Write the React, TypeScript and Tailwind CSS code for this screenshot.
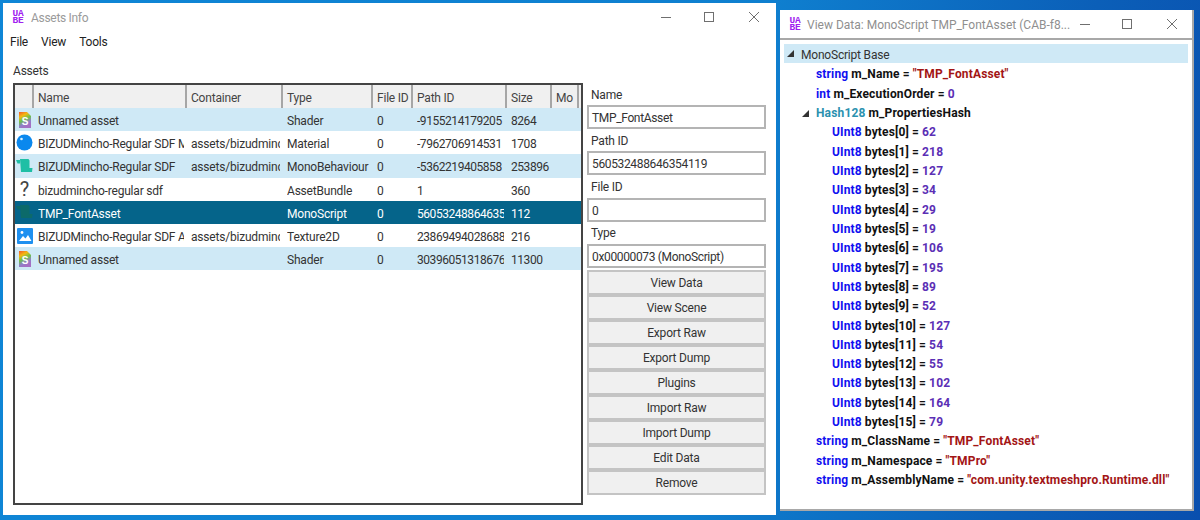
import React from 'react';

const columns = [
  { label: '', width: 'w-[19px]' },
  { label: 'Name', width: 'w-[153px]' },
  { label: 'Container', width: 'w-[96px]' },
  { label: 'Type', width: 'w-[90px]' },
  { label: 'File ID', width: 'w-[40px]' },
  { label: 'Path ID', width: 'w-[94px]' },
  { label: 'Size', width: 'w-[45px]' },
  { label: 'Mo', width: 'w-[27px]' },
];

const rows = [
  { icon: 'shader', name: 'Unnamed asset', container: '', type: 'Shader', fileId: '0', pathId: '-9155214179205', size: '8264' },
  { icon: 'material', name: 'BIZUDMincho-Regular SDF M', container: 'assets/bizudminc', type: 'Material', fileId: '0', pathId: '-7962706914531', size: '1708' },
  { icon: 'mono', name: 'BIZUDMincho-Regular SDF', container: 'assets/bizudminc', type: 'MonoBehaviour', fileId: '0', pathId: '-5362219405858', size: '253896' },
  { icon: 'unknown', name: 'bizudmincho-regular sdf', container: '', type: 'AssetBundle', fileId: '0', pathId: '1', size: '360' },
  { icon: 'script', name: 'TMP_FontAsset', container: '', type: 'MonoScript', fileId: '0', pathId: '56053248864635', size: '112', selected: true },
  { icon: 'texture', name: 'BIZUDMincho-Regular SDF A', container: 'assets/bizudminc', type: 'Texture2D', fileId: '0', pathId: '23869494028688', size: '216' },
  { icon: 'shader', name: 'Unnamed asset', container: '', type: 'Shader', fileId: '0', pathId: '30396051318676', size: '11300' },
];

const fields = [
  { label: 'Name', value: 'TMP_FontAsset' },
  { label: 'Path ID', value: '560532488646354119' },
  { label: 'File ID', value: '0' },
  { label: 'Type', value: '0x00000073 (MonoScript)' },
];

const buttons = ['View Data', 'View Scene', 'Export Raw', 'Export Dump', 'Plugins', 'Import Raw', 'Import Dump', 'Edit Data', 'Remove'];

const bytes = [62, 218, 127, 34, 29, 19, 106, 195, 89, 52, 127, 54, 55, 102, 164, 79];

const Logo = () => (
  <div className="w-[12px] flex flex-col items-center font-['Liberation_Mono',monospace] font-bold text-[9.500px] leading-[7px] text-[#a020f0]">
    <span>UA</span>
    <span>BE</span>
  </div>
);

const WindowButtons = ({ gaps }: { gaps: [string, string] }) => (
  <div className="flex items-center text-[#6f6f6f]">
    <svg width="12" height="12" viewBox="0 0 12 12" className={gaps[0]}>
      <path d="M1 6.500h10" stroke="currentColor" fill="none" />
    </svg>
    <svg width="12" height="12" viewBox="0 0 12 12" className={gaps[1]}>
      <rect x="1.500" y="1.500" width="9" height="9" stroke="currentColor" fill="none" />
    </svg>
    <svg width="12" height="12" viewBox="0 0 12 12">
      <path d="M1 1l10 10M11 1L1 11" stroke="currentColor" fill="none" />
    </svg>
  </div>
);

const AssetIcon = ({ kind, id }: { kind: string; id: number }) => {
  if (kind === 'shader') {
    return (
      <svg width="14" height="18" viewBox="0 0 14 18">
        <defs>
          <linearGradient id={`rainbow${id}`} x1="0" y1="0" x2="0.4" y2="1">
            <stop offset="0" stopColor="#f0562a" />
            <stop offset="0.3" stopColor="#f5b811" />
            <stop offset="0.55" stopColor="#6cc24a" />
            <stop offset="0.8" stopColor="#8f7fc8" />
            <stop offset="1" stopColor="#a56fc4" />
          </linearGradient>
        </defs>
        <path d="M1 1h8l4 4v12H1z" fill={`url(#rainbow${id})`} />
        <text x="7" y="14" textAnchor="middle" fontSize="10" fontWeight="700" fill="#fff" fontFamily="Liberation Sans, sans-serif">S</text>
      </svg>
    );
  }
  if (kind === 'material') {
    return (
      <svg width="17" height="17" viewBox="0 0 17 17">
        <circle cx="8.500" cy="8.500" r="8" fill="#0a88ee" />
        <circle cx="5.500" cy="5" r="1.300" fill="#d6f0ff" />
      </svg>
    );
  }
  if (kind === 'mono' || kind === 'script') {
    const fill = kind === 'mono' ? '#1fbfa5' : '#0c6a6a';
    return (
      <svg width="17" height="14" viewBox="0 0 17 14">
        <path d="M0 1h4v3.500H1.500z" fill={fill} />
        <path d="M4 0h8.500l1 1.500V9h3l-.5 4H5z" fill={fill} />
      </svg>
    );
  }
  if (kind === 'texture') {
    return (
      <svg width="16" height="16" viewBox="0 0 16 16">
        <rect width="16" height="16" rx="1" fill="#1e90f0" />
        <path d="M2 13l4-5 2.500 2.500L11 7l3.500 6z" fill="#fff" />
        <circle cx="5" cy="4.500" r="1.400" fill="#fff" />
      </svg>
    );
  }
  return <span className="text-[20px] leading-none text-[#444]">?</span>;
};

const TreeLine = ({ indent, type, name, value, kind }: { indent: string; type: string; name: string; value?: string; kind?: 'text' | 'num' }) => (
  <div className={`h-[19.32px] pt-[3px] flex items-center whitespace-nowrap font-bold tracking-[0.15px] ${indent}`}>
    <span className="text-[#1010f0]">{type}</span>
    <span className="text-[#111] ml-[3px]">{name}</span>
    {value && (
      <>
        <span className="text-[#111] ml-[3px]">=</span>
        <span className={`ml-[3px] ${kind === 'text' ? 'text-[#a31515]' : 'text-[#5b2fb5]'}`}>{value}</span>
      </>
    )}
  </div>
);

const Caret = () => <span className="w-0 h-0 border-l-[7px] border-l-transparent border-b-[7px] border-b-[#333]" />;

const App: React.FC = () => {
  return (
    <div className="w-[1200px] h-[520px] overflow-hidden flex items-start pl-[3px] pt-[3px] bg-[linear-gradient(100deg,#0f86d6_0%,#0f7fcf_60%,#0b5fb8_85%,#0a4fae_100%)] font-['Roboto',sans-serif] text-[12px] tracking-[-0.2px] text-[#333]">
      {/* Assets Info window */}
      <div className="w-[773px] h-[512px] bg-white flex flex-col shrink-0">
        <div className="h-[28px] flex items-center justify-between pl-[9px] pr-[16px] shrink-0">
          <div className="flex items-center gap-[7px]">
            <Logo />
            <span className="text-[#9a9a9a] pt-[2px] tracking-[-0.3px]">Assets Info</span>
          </div>
          <WindowButtons gaps={['mr-[31px]', 'mr-[33px]']} />
        </div>
        <div className="h-[21px] flex items-center gap-[13px] pl-[7px] text-[#222]">
          <span>File</span>
          <span>View</span>
          <span>Tools</span>
        </div>
        <div className="h-[31px] flex items-end pl-[10px] pb-[3px]">Assets</div>
        <div className="flex pl-[10px] gap-[4px]">
          <div className="w-[570px] h-[422px] border-2 border-[#444] flex flex-col">
            <div className="h-[23px] flex bg-[#f0f0f0] text-[#444]">
              {columns.map((col, i) => (
                <div key={i} className={`${col.width} h-full pl-[4px] pt-[2px] flex items-center border-r-2 border-[#a6a6a6] overflow-hidden whitespace-nowrap`}>
                  {col.label}
                </div>
              ))}
            </div>
            {rows.map((row, i) => {
              const bg = row.selected ? 'bg-[#05648a] text-white' : i % 2 === 0 ? 'bg-[#cfe9f6]' : 'bg-white';
              return (
                <div key={i} className={`h-[23.2px] flex items-center whitespace-nowrap ${bg}`}>
                  <div className="w-[19px] flex justify-center items-center overflow-hidden"><AssetIcon kind={row.icon} id={i} /></div>
                  <div className="w-[153px] pl-[4px] pr-[3px] pt-[3px]"><div className="overflow-hidden">{row.name}</div></div>
                  <div className="w-[96px] pl-[4px] pr-[3px] pt-[3px]"><div className="overflow-hidden">{row.container}</div></div>
                  <div className="w-[90px] pl-[4px] pr-[3px] pt-[3px]"><div className="overflow-hidden">{row.type}</div></div>
                  <div className="w-[40px] pl-[4px] pt-[3px]">{row.fileId}</div>
                  <div className="w-[94px] pl-[4px] pr-[3px] pt-[3px] tracking-[-0.45px]"><div className="overflow-hidden">{row.pathId}</div></div>
                  <div className="w-[45px] pl-[4px] pt-[3px] tracking-[-0.45px]">{row.size}</div>
                </div>
              );
            })}
          </div>
          <div className="w-[179px] flex flex-col">
            {fields.map((f) => (
              <div key={f.label} className="h-[46.300px] flex flex-col">
                <div className="h-[22px] pl-[4px] pt-[1px] flex items-center">{f.label}</div>
                <div className="h-[24px] border-2 border-[#b4b4b4] flex items-center pl-[3px] pt-[2px] whitespace-nowrap overflow-hidden tracking-[-0.35px]">{f.value}</div>
              </div>
            ))}
            <div className="flex flex-col mt-[2px]">
              {buttons.map((b) => (
                <div key={b} className="h-[25px] bg-[#f0f0f0] border-2 border-[#c4c4c4] flex items-center justify-center">{b}</div>
              ))}
            </div>
          </div>
        </div>
      </div>

      {/* View Data window */}
      <div className="w-[414px] h-[501px] ml-[4px] mt-[7px] bg-white flex flex-col shrink-0 border-r-2 border-b-2 border-[#a8a8a8]">
        <div className="h-[30px] flex items-center justify-between pl-[9px] pr-[14px] border-b-2 border-[#a8a8a8] shrink-0">
          <div className="flex items-center gap-[6px]">
            <Logo />
            <span className="text-[#8f8f8f] whitespace-nowrap pt-[2px] tracking-normal">View Data: MonoScript TMP_FontAsset (CAB-f8...</span>
          </div>
          <WindowButtons gaps={['mr-[30px]', 'mr-[33px]']} />
        </div>
        <div className="pl-[4px] pr-[4px] pt-[4px] flex flex-col">
          <div className="h-[19.32px] bg-[#cfe9f6] flex items-center pl-[3px] gap-[7px]">
            <Caret />
            <span className="pt-[3px]">MonoScript Base</span>
          </div>
          <TreeLine indent="pl-[32px]" type="string" name="m_Name" value={'"TMP_FontAsset"'} kind="text" />
          <TreeLine indent="pl-[32px]" type="int" name="m_ExecutionOrder" value="0" kind="num" />
          <div className="h-[19.32px] pt-[3px] flex items-center pl-[18px] gap-[7px] font-bold tracking-[0.15px]">
            <Caret />
            <span className="text-[#2b91af]">Hash128</span>
            <span className="text-[#111] -ml-[4px]">m_PropertiesHash</span>
          </div>
          {bytes.map((v, i) => (
            <TreeLine key={i} indent="pl-[48px]" type="UInt8" name={`bytes[${i}]`} value={String(v)} kind="num" />
          ))}
          <TreeLine indent="pl-[32px]" type="string" name="m_ClassName" value={'"TMP_FontAsset"'} kind="text" />
          <TreeLine indent="pl-[32px]" type="string" name="m_Namespace" value={'"TMPro"'} kind="text" />
          <TreeLine indent="pl-[32px]" type="string" name="m_AssemblyName" value={'"com.unity.textmeshpro.Runtime.dll"'} kind="text" />
        </div>
      </div>
    </div>
  );
};

export default App;
